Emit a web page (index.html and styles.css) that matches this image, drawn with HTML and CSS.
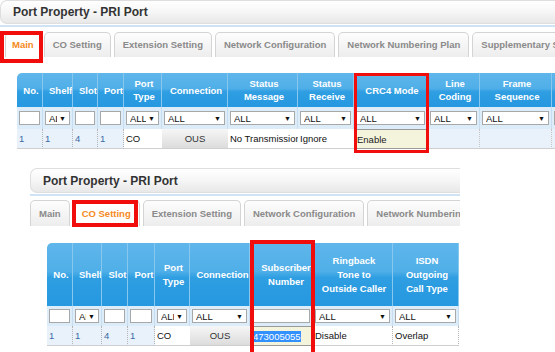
FILE: index.html
```html
<!DOCTYPE html>
<html>
<head>
<meta charset="utf-8">
<title>Port Property - PRI Port</title>
<link rel="stylesheet" href="styles.css">
</head>
<body>
<div class="shot shot1">
  <div class="titlebar">Port Property - PRI Port</div>
  <div class="rule"></div>
  <div class="tabs">
    <div class="tab active tight">Main</div>
    <div class="tab">CO Setting</div>
    <div class="tab">Extension Setting</div>
    <div class="tab">Network Configuration</div>
    <div class="tab">Network Numbering Plan</div>
    <div class="tab">Supplementary Service</div>
  </div>
  <div class="grid-wrap">
    <table class="grid grid1">
      <colgroup>
        <col class="w26"><col class="w30"><col class="w25"><col class="w26"><col class="w38"><col class="w66">
        <col class="w70"><col class="w56"><col class="w74"><col class="w52"><col class="w72"><col class="w60">
      </colgroup>
      <thead>
        <tr>
          <th>No.</th><th class="clip">Shelf</th><th class="clip">Slot</th><th class="clip">Port</th>
          <th>Port Type</th><th>Connection</th><th>Status Message</th><th>Status Receive</th>
          <th>CRC4 Mode</th><th>Line Coding</th><th>Frame Sequence</th><th></th>
        </tr>
      </thead>
      <tbody>
        <tr class="filter">
          <td><div class="inp"></div></td>
          <td><div class="sbox"><span class="v">ALL</span><span class="arr">▼</span></div></td>
          <td><div class="inp"></div></td>
          <td><div class="inp"></div></td>
          <td><div class="sbox"><span class="v">ALL</span><span class="arr">▼</span></div></td>
          <td><div class="sbox"><span class="v">ALL</span><span class="arr">▼</span></div></td>
          <td><div class="sbox"><span class="v">ALL</span><span class="arr">▼</span></div></td>
          <td><div class="sbox"><span class="v">ALL</span><span class="arr">▼</span></div></td>
          <td><div class="sbox"><span class="v">ALL</span><span class="arr">▼</span></div></td>
          <td><div class="sbox"><span class="v">ALL</span><span class="arr">▼</span></div></td>
          <td><div class="sbox"><span class="v">ALL</span><span class="arr">▼</span></div></td>
          <td><div class="sbox"><span class="v">ALL</span><span class="arr">▼</span></div></td>
        </tr>
        <tr class="data">
          <td class="idx">1</td><td class="idx">1</td><td class="idx">4</td><td class="idx">1</td>
          <td class="plain">CO</td><td class="btn">OUS</td><td class="plain">No Transmission</td>
          <td class="plain">Ignore</td><td class="edit">Enable</td><td class="blank"></td><td class="blank"></td><td class="blank"></td>
        </tr>
      </tbody>
    </table>
  </div>
  <div class="mark m-main"></div>
  <div class="mark m-crc"></div>
</div>

<div class="shot shot2">
  <div class="titlebar">Port Property - PRI Port</div>
  <div class="rule"></div>
  <div class="tabs">
    <div class="tab">Main</div>
    <div class="tab active">CO Setting</div>
    <div class="tab">Extension Setting</div>
    <div class="tab">Network Configuration</div>
    <div class="tab">Network Numbering Plan</div>
  </div>
  <div class="grid-wrap">
    <table class="grid grid2">
      <colgroup>
        <col class="w26"><col class="w29"><col class="w26"><col class="w27"><col class="w35"><col class="w60">
        <col class="w63"><col class="w80"><col class="w66">
      </colgroup>
      <thead>
        <tr>
          <th>No.</th><th class="clip">Shelf</th><th class="clip">Slot</th><th class="clip">Port</th>
          <th>Port Type</th><th class="clip">Connection</th><th class="sub">Subscriber Number</th>
          <th>Ringback<br>Tone to<br>Outside Caller</th><th>ISDN<br>Outgoing<br>Call Type</th>
        </tr>
      </thead>
      <tbody>
        <tr class="filter">
          <td><div class="inp"></div></td>
          <td><div class="sbox"><span class="v">ALL</span><span class="arr">▼</span></div></td>
          <td><div class="inp"></div></td>
          <td><div class="inp"></div></td>
          <td><div class="sbox"><span class="v">ALL</span><span class="arr">▼</span></div></td>
          <td><div class="sbox"><span class="v">ALL</span><span class="arr">▼</span></div></td>
          <td><div class="inp"></div></td>
          <td><div class="sbox"><span class="v">ALL</span><span class="arr">▼</span></div></td>
          <td><div class="sbox"><span class="v">ALL</span><span class="arr">▼</span></div></td>
        </tr>
        <tr class="data">
          <td class="idx">1</td><td class="idx">1</td><td class="idx">4</td><td class="idx">1</td>
          <td class="plain">CO</td><td class="btn">OUS</td>
          <td class="edit"><span class="selected">473005055</span></td>
          <td class="plain dotted">Disable</td><td class="plain dotted">Overlap</td>
        </tr>
      </tbody>
    </table>
  </div>
  <div class="mark m-co"></div>
  <div class="mark m-sub"></div>
</div>
</body>
</html>
```

FILE: styles.css
```css
* { box-sizing: border-box; }

body {
  margin: 0;
  width: 555px;
  height: 352px;
  overflow: hidden;
  background: #fff;
  font-family: "Liberation Sans", Arial, sans-serif;
}

.shot {
  position: relative;
  overflow: hidden;
}

.shot1 {
  width: 555px;
  height: 156px;
}

.shot2 {
  width: 430px;
  height: 184px;
  margin: 12px 0 0 30px;
}

.titlebar {
  height: 24px;
  padding-left: 12px;
  display: flex;
  align-items: center;
  border: 1px solid #dedede;
  border-right: none;
  border-radius: 7px 0 0 7px;
  background: linear-gradient(#ffffff, #f7f7f7 45%, #e8e8e8);
  font-size: 12px;
  font-weight: bold;
  color: #333;
}

.shot2 .titlebar { height: 25px; }

.rule {
  height: 2px;
  margin-top: 1px;
  background: #cfe3f5;
}

.tabs {
  display: flex;
  gap: 3px;
  margin-top: 5px;
  padding-left: 5px;
}

.shot2 .tabs {
  margin-top: 4px;
  padding-left: 0;
}

.tab {
  flex: none;
  height: 25px;
  padding: 0 8px;
  border: 1px solid #d4d4d4;
  border-bottom: none;
  border-radius: 5px 5px 0 0;
  background: linear-gradient(#fdfdfd, #ededed);
  font-size: 9.5px;
  font-weight: bold;
  line-height: 24px;
  color: #8a8a8a;
  white-space: nowrap;
}

.shot2 .tab {
  height: 26px;
  line-height: 25px;
}

.tab.active {
  background: #fff;
  color: #f48a22;
}

.tab.tight { padding: 0 6px; }

.grid-wrap {
  margin-top: 16px;
  padding-left: 17px;
}

.shot2 .grid-wrap { margin-top: 17px; }

.grid {
  border-collapse: separate;
  border-spacing: 0;
  table-layout: fixed;
  font-size: 9.5px;
}

.grid1 { width: 595px; }
.grid2 { width: 412px; }

.w25 { width: 25px; }
.w26 { width: 26px; }
.w27 { width: 27px; }
.w29 { width: 29px; }
.w30 { width: 30px; }
.w35 { width: 35px; }
.w38 { width: 38px; }
.w52 { width: 52px; }
.w56 { width: 56px; }
.w60 { width: 60px; }
.w63 { width: 63px; }
.w66 { width: 66px; }
.w70 { width: 70px; }
.w72 { width: 72px; }
.w74 { width: 74px; }
.w80 { width: 80px; }

.grid th {
  height: 34px;
  padding: 0 2px 0 5px;
  overflow: hidden;
  border-right: 1px solid #88c7ee;
  background: linear-gradient(#5fb6eb, #50afe8 45%, #2f9ee2 55%, #2598e0);
  color: #fff;
  font-weight: bold;
  line-height: 13px;
  text-align: center;
  vertical-align: middle;
}

.grid2 th {
  height: 63px;
  line-height: 14px;
}

.grid th:first-child { border-top-left-radius: 5px; }

.grid th.clip {
  padding-left: 6px;
  padding-right: 0;
  white-space: nowrap;
}

.grid th.sub {
  padding-left: 10px;
  padding-right: 0;
}

.filter td {
  height: 22px;
  padding: 0 2px;
  border-right: 1px solid #c8ddf0;
  background: #ddecf9;
  vertical-align: middle;
}

.grid2 .filter td { height: 20px; }

.inp {
  height: 14px;
  border: 1px solid #a8a8a8;
  background: #fff;
}

.sbox {
  height: 14px;
  display: flex;
  align-items: center;
  padding: 0 3px;
  border: 1px solid #a8a8a8;
  background: #fff;
  color: #111;
  font-size: 9.5px;
}

.sbox .v {
  flex: 1;
  min-width: 0;
  overflow: hidden;
  white-space: nowrap;
}

.sbox .arr {
  flex: none;
  margin-left: 2px;
  font-size: 7px;
}

.data td {
  height: 20px;
  padding: 0 2px;
  overflow: hidden;
  white-space: nowrap;
  border-bottom: 1px solid #cfcfcf;
  vertical-align: middle;
}

.data td.idx {
  background: #e9f2fb;
  color: #3a6aa3;
  border-right: 1px dotted #b5b5b5;
}

.data td.plain {
  background: #fff;
  color: #111;
}

.data td.dotted { border-right: 1px dotted #b5b5b5; }

.data td.btn {
  background: linear-gradient(#f6f6f6, #dcdcdc);
  color: #333;
  text-align: center;
}

.data td.edit {
  background: #f4f4dc;
  color: #222;
  border: 1px solid #9a9a9a;
}

.data td.blank {
  background: #e9f2fb;
  border-right: 1px dotted #c5c5c5;
}

.selected {
  background: #3390ff;
  color: #fff;
}

.mark {
  position: absolute;
  border: 4px solid #f20d0d;
}

.m-main { left: 0; top: 31px; width: 43px; height: 32px; }
.m-crc { left: 354px; top: 73px; width: 75px; height: 80px; border-width: 3px; }
.m-co { left: 42px; top: 32px; width: 66px; height: 27px; }
.m-sub { left: 220px; top: 72px; width: 65px; height: 130px; }
```
